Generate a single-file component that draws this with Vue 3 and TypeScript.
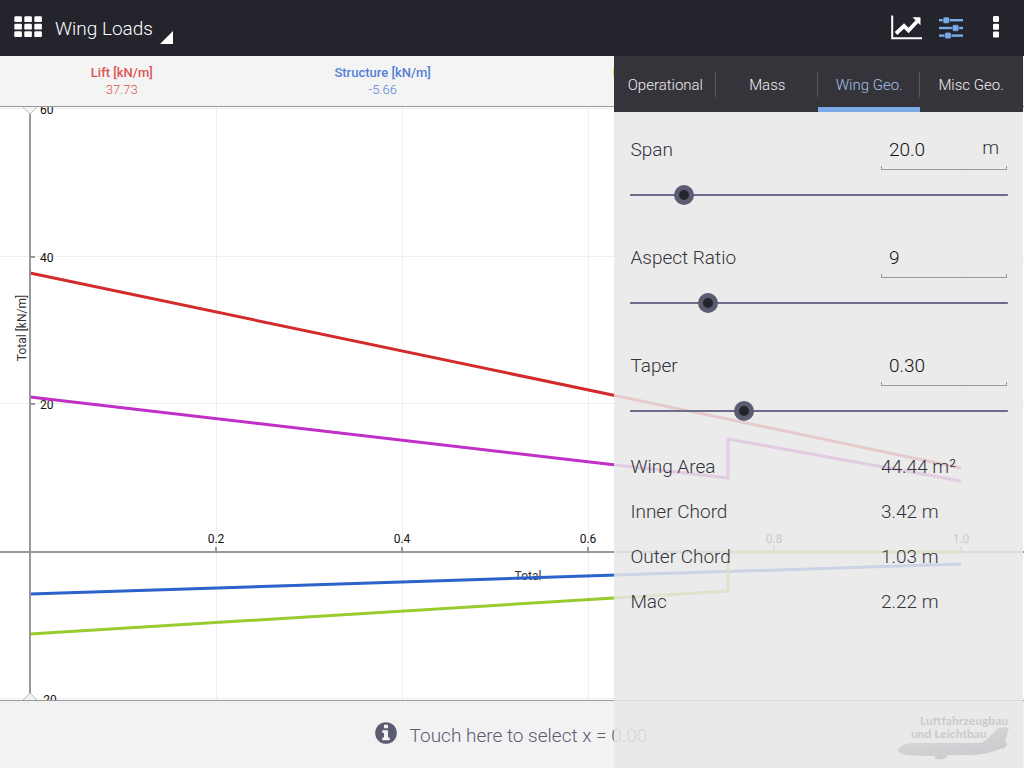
<script setup lang="ts">
import { computed, onBeforeUnmount, onMounted, reactive, ref } from 'vue'

interface Series {
  name: string
  value: string
  color: string
  text: string
  points: [number, number][]
}

interface Param {
  id: 'span' | 'aspect' | 'taper'
  label: string
  unit: string
  min: number
  max: number
  step: number
  digits: number
}

const series: Series[] = [
  { name: 'Lift', value: '37.73', color: '#d32b2b', text: '#dd5555', points: [[0, 37.73], [1, 11.32]] },
  { name: 'Structure', value: '-5.66', color: '#2b62cc', text: '#5580d6', points: [[0, -5.66], [1, -1.7]] },
  { name: 'Fuel', value: '-11.08', color: '#99cb2f', text: '#a5d050', points: [[0, -11.08], [0.75, -5.28], [0.75, 0], [1, 0]] },
  { name: 'Total', value: '20.99', color: '#c02fc6', text: '#cc55d0', points: [[0, 20.99], [0.75, 9.96], [0.75, 15.23], [1, 9.62]] },
]

const tabs = ['Operational', 'Mass', 'Wing Geo.', 'Misc Geo.']
const activeTab = ref('Wing Geo.')

const params: Param[] = [
  { id: 'span', label: 'Span', unit: 'm', min: 10, max: 80, step: 0.5, digits: 1 },
  { id: 'aspect', label: 'Aspect Ratio', unit: '', min: 2, max: 36, step: 1, digits: 0 },
  { id: 'taper', label: 'Taper', unit: '', min: 0, max: 1, step: 0.01, digits: 2 },
]
const values = reactive({ span: 20, aspect: 9, taper: 0.3 })

function setValue(p: Param, e: Event) {
  const n = Number((e.target as HTMLInputElement).value)
  if (!Number.isNaN(n)) values[p.id] = Math.min(p.max, Math.max(p.min, n))
}

const results = computed(() => {
  const area = (values.span * values.span) / values.aspect
  const inner = (2 * area) / (values.span * (1 + values.taper))
  return [
    { label: 'Wing Area', value: `${area.toFixed(2)} m²` },
    { label: 'Inner Chord', value: `${inner.toFixed(2)} m` },
    { label: 'Outer Chord', value: `${(inner * values.taper).toFixed(2)} m` },
    { label: 'Mac', value: `${(area / values.span).toFixed(2)} m` },
  ]
})

const plot = ref<HTMLElement | null>(null)
const size = reactive({ w: 1024, h: 593 })
const originX = 30
const yTop = 60.27
const yRange = 80.35

const sx = (v: number) => Math.floor(originX + v * (size.w - 93))
const sy = (v: number) => Math.round(((yTop - v) / yRange) * size.h)
const line = (s: Series) => s.points.map(([x, y]) => `${sx(x)},${sy(y)}`).join(' ')

const xTicks = [0.2, 0.4, 0.6, 0.8, 1]
const yTicks = [60, 40, 20, -20]

let observer: ResizeObserver | undefined
onMounted(() => {
  observer = new ResizeObserver(([entry]) => {
    size.w = entry.contentRect.width
    size.h = entry.contentRect.height
  })
  if (plot.value) observer.observe(plot.value)
})
onBeforeUnmount(() => observer?.disconnect())
</script>

<template>
  <div class="app">
    <header class="bar">
      <button class="icon-btn" type="button" aria-label="Apps">
        <svg width="28" height="22" viewBox="0 0 28 22" fill="#fff">
          <template v-for="r in 3" :key="r">
            <rect v-for="c in 3" :key="c" :x="(c - 1) * 10 + 0.3" :y="(r - 1) * 7.5 + 0.3" width="7.6" height="5.8" rx="1.2" />
          </template>
        </svg>
      </button>
      <button class="title" type="button">
        <span>Wing Loads</span>
        <svg width="13" height="13" viewBox="0 0 13 13"><path d="M0 13L13 0V13Z" fill="#fff" /></svg>
      </button>
      <div class="actions">
        <button class="icon-btn" type="button" aria-label="Chart">
          <svg width="32" height="25" viewBox="0 0 32 25">
            <path d="M1.2 0.5V23.2H31" fill="none" stroke="#fff" stroke-width="2" />
            <path d="M5 18.5L13 11L17.500 15.500L26 6.500" fill="none" stroke="#fff" stroke-width="3.8" />
            <path d="M21.500 2.200H28.500Q29.500 2.200 29.500 3.200V10.200Z" fill="#fff" />
          </svg>
        </button>
        <button class="icon-btn" type="button" aria-label="Settings">
          <svg width="24" height="24" viewBox="0 -2 24 24" fill="#7aabe8">
            <rect y="2" width="24" height="2.4" /><rect y="9.8" width="24" height="2.4" /><rect y="17.4" width="24" height="2.4" />
            <g stroke="#24242c" stroke-width="0.6">
              <rect x="4" y="0" width="6.5" height="6.5" rx="1.5" />
              <rect x="13.3" y="7.7" width="6.5" height="6.5" rx="1.5" />
              <rect x="5.7" y="15.3" width="6.5" height="6.5" rx="1.5" />
            </g>
          </svg>
        </button>
        <button class="icon-btn" type="button" aria-label="More">
          <svg width="6" height="22" viewBox="0 0 6 22" fill="#fff">
            <rect width="6" height="6" rx="1.2" /><rect y="7.7" width="6" height="6" rx="1.2" /><rect y="15.4" width="6" height="6" rx="1.2" />
          </svg>
        </button>
      </div>
    </header>

    <main class="content">
      <div class="legend">
        <div v-for="s in series" :key="s.name" class="legend-item" :style="{ color: s.text }">
          <strong>{{ s.name }} [kN/m]</strong>
          <span>{{ s.value }}</span>
        </div>
      </div>

      <div ref="plot" class="plot">
        <svg class="chart" :viewBox="`0 0 ${size.w} ${size.h}`">
          <g stroke="#eeeeee" stroke-width="1">
            <line v-for="t in xTicks" :key="t" :x1="sx(t) + 0.5" :x2="sx(t) + 0.5" y1="0" :y2="size.h" />
            <line v-for="t in yTicks" :key="t" x1="0" :x2="size.w" :y1="sy(t) - 0.5" :y2="sy(t) - 0.5" />
          </g>
          <g stroke="#999" stroke-width="2">
            <line x1="0" :x2="size.w" :y1="sy(0)" :y2="sy(0)" />
            <line v-for="t in xTicks" :key="t" :x1="sx(t)" :x2="sx(t)" :y1="sy(0) - 5" :y2="sy(0)" />
            <line v-for="t in yTicks" :key="t" :x1="originX" :x2="originX + 5" :y1="sy(t)" :y2="sy(t)" />
          </g>
          <g class="ticks">
            <text v-for="t in xTicks" :key="t" :x="sx(t)" :y="sy(0) - 9" text-anchor="middle">{{ t.toFixed(1) }}</text>
            <text v-for="t in yTicks" :key="t" :x="originX + 10" :y="sy(t) + 5">{{ t }}</text>
          </g>
          <g class="axis-names">
            <text :x="sx(0.5) + 33" :y="sy(0) + 28" text-anchor="middle">Total</text>
            <text :transform="`translate(26 ${sy(30) - 2}) rotate(-90)`" text-anchor="middle">Total [kN/m]</text>
          </g>
          <polyline v-for="s in series" :key="s.name" :points="line(s)" fill="none" :stroke="s.color" stroke-width="3" />
          <line :x1="originX" :x2="originX" y1="0" :y2="size.h" stroke="#999" stroke-width="2" />
          <path d="M22 -1L30 7L38 -1" fill="#f4f4f4" stroke="#bbb" />
          <path :d="`M22 ${size.h + 1}L30 ${size.h - 7}L38 ${size.h + 1}`" fill="#f2f2f2" stroke="#bbb" />
        </svg>
      </div>

      <footer class="footer">
        <button class="select-x" type="button">
          <svg width="22" height="22" viewBox="0 0 22 22">
            <circle cx="11" cy="11" r="10.8" fill="#5b5b72" />
            <path d="M9 2.8H13V6.2H9ZM7.3 8.2H13V15.5H14.7V18.3H7.3V15.5H9V11H7.3Z" fill="#f2f2f2" />
          </svg>
          <span>Touch here to select x = 0.00</span>
        </button>
        <svg class="logo" width="120" height="50" viewBox="0 0 120 50">
          <defs>
            <linearGradient id="hull" x1="0" y1="0" x2="0.7" y2="1">
              <stop offset="0" stop-color="#8e90a0" />
              <stop offset="1" stop-color="#26283c" />
            </linearGradient>
          </defs>
          <path d="M2 36Q3 31 15 29H82Q88 29 92 24L101 15Q103 13.500 105 13.500H113L109 28Q112 29 111 31Q109 35 104 35Q92 40 78 41H52Q50 45 44 45.500Q38 46 39 42Q14 42 6 40Q2 38 2 36Z" fill="url(#hull)" />
          <text x="24" y="11">Luftfahrzeugbau</text>
          <text x="15" y="24">und Leichtbau</text>
        </svg>
      </footer>

      <aside class="panel">
        <nav class="tabs">
          <button v-for="t in tabs" :key="t" type="button" class="tab" :class="{ active: t === activeTab }" @click="activeTab = t">{{ t }}</button>
        </nav>
        <div class="panel-body">
          <section v-for="p in params" :key="p.id" class="param">
            <div class="param-row">
              <label :for="p.id">{{ p.label }}</label>
              <div class="field">
                <input :id="p.id" type="text" inputmode="decimal" :value="values[p.id].toFixed(p.digits)" @change="setValue(p, $event)" />
                <span v-if="p.unit" class="unit">{{ p.unit }}</span>
              </div>
            </div>
            <div class="slider">
              <input type="range" :aria-label="p.label" :min="p.min" :max="p.max" :step="p.step" :value="values[p.id]" @input="setValue(p, $event)" />
            </div>
          </section>
          <dl class="results">
            <div v-for="r in results" :key="r.label" class="result">
              <dt>{{ r.label }}</dt>
              <dd>{{ r.value }}</dd>
            </div>
          </dl>
        </div>
      </aside>
    </main>
  </div>
</template>

<style>
body {
  margin: 0;
}
</style>

<style scoped>
.app {
  display: flex;
  flex-direction: column;
  min-height: 100vh;
  font-family: Roboto, "Liberation Sans", sans-serif;
  font-weight: 300;
  font-size: 19px;
  color: #33333b;
  background: #fff;
}
button,
input {
  font: inherit;
  color: inherit;
  border: 0;
  margin: 0;
  padding: 0;
  background: none;
}
button {
  cursor: pointer;
}
svg {
  display: block;
}
.bar {
  display: flex;
  align-items: center;
  height: 56px;
  padding: 0 25px 0 14px;
  box-sizing: border-box;
  background: #24242c;
  color: #fff;
}
.icon-btn {
  padding-bottom: 2px;
}
.title {
  display: flex;
  align-items: flex-end;
  gap: 7px;
  height: 32px;
  margin-left: 13px;
}
.title span {
  align-self: center;
}
.actions {
  display: flex;
  align-items: center;
  margin-left: auto;
}
.actions .icon-btn + .icon-btn {
  margin-left: 16px;
}
.actions .icon-btn + .icon-btn:last-child {
  margin-left: 30px;
}
.content {
  position: relative;
  flex: 1;
  display: flex;
  flex-direction: column;
}
.legend {
  display: flex;
  justify-content: space-around;
  height: 50px;
  background: #f4f4f4;
  border-bottom: 1px solid #999;
}
.legend-item {
  display: flex;
  flex-direction: column;
  align-items: center;
  padding-top: 8px;
  font-size: 13px;
  line-height: 17px;
}
.legend-item strong {
  font-weight: 500;
}
.plot {
  position: relative;
  flex: 1;
  min-height: 300px;
  overflow: hidden;
}
.chart {
  position: absolute;
  inset: 0;
  width: 100%;
  height: 100%;
}
.ticks {
  font-size: 12px;
  font-weight: 400;
  fill: #111;
}
.axis-names {
  font-size: 12px;
  font-weight: 400;
  fill: #333;
}
.footer {
  position: relative;
  display: flex;
  justify-content: center;
  align-items: center;
  height: 67px;
  background: #f2f2f2;
  border-top: 1px solid #999;
}
.select-x {
  display: flex;
  align-items: center;
  gap: 13px;
  padding: 2px 2px 0 0;
  color: #5b5b72;
}
.select-x svg {
  margin-bottom: 5px;
}
.logo {
  position: absolute;
  right: 8px;
  bottom: 4px;
  font-family: Lato, sans-serif;
  font-size: 12px;
  font-weight: 900;
  fill: #26283c;
}
.panel {
  position: absolute;
  top: 0;
  bottom: 0;
  left: 60%;
  right: 1px;
  background: rgba(231, 231, 231, 0.85);
}
.tabs {
  display: flex;
  height: 56px;
  padding-right: 1px;
  background: #36343b;
}
.tab {
  position: relative;
  flex: 1 1 0;
  min-width: 0;
  font-size: 15px;
  color: #eee;
  white-space: nowrap;
  border-bottom: 5px solid transparent;
  border-top: 7px solid transparent;
}
.tab + .tab::before {
  content: "";
  position: absolute;
  left: -1px;
  top: 9px;
  height: 25px;
  width: 1px;
  background: #5a585f;
}
.tab.active {
  color: #a0c0e8;
  border-bottom-color: #7aabe8;
}
.panel-body {
  padding: 16px 15px 0 16px;
}
.param {
  height: 108px;
}
.param-row,
.result {
  display: flex;
  justify-content: space-between;
  align-items: center;
  padding-right: 1px;
}
.param-row {
  height: 42px;
  margin-bottom: 15px;
}
.field {
  position: relative;
  display: flex;
  align-items: center;
  width: 126px;
  height: 42px;
}
.field::after {
  content: "";
  position: absolute;
  left: 0;
  right: 0;
  bottom: 0;
  height: 3px;
  border: 1px solid #999;
  border-top: 0;
  pointer-events: none;
}
.field input {
  flex: 1;
  min-width: 0;
  padding-left: 8px;
  color: #111;
  outline: none;
}
.unit {
  padding: 0 8px 4px 0;
}
.slider {
  height: 20px;
  background: linear-gradient(#6d6d8a, #6d6d8a) center / 100% 2px no-repeat;
}
.slider input {
  display: block;
  appearance: none;
  width: calc(100% + 20px);
  height: 20px;
  margin: 0 -10px;
  cursor: pointer;
}
.slider input::-webkit-slider-thumb {
  appearance: none;
  width: 20px;
  height: 20px;
  border: 5px solid #5b5b72;
  border-radius: 50%;
  background: #24242c;
}
.results {
  margin: -8px 0 0;
  padding-bottom: 16px;
}
.result {
  height: 45px;
}
.result dd {
  width: 126px;
  margin: 0;
  white-space: nowrap;
}
</style>
